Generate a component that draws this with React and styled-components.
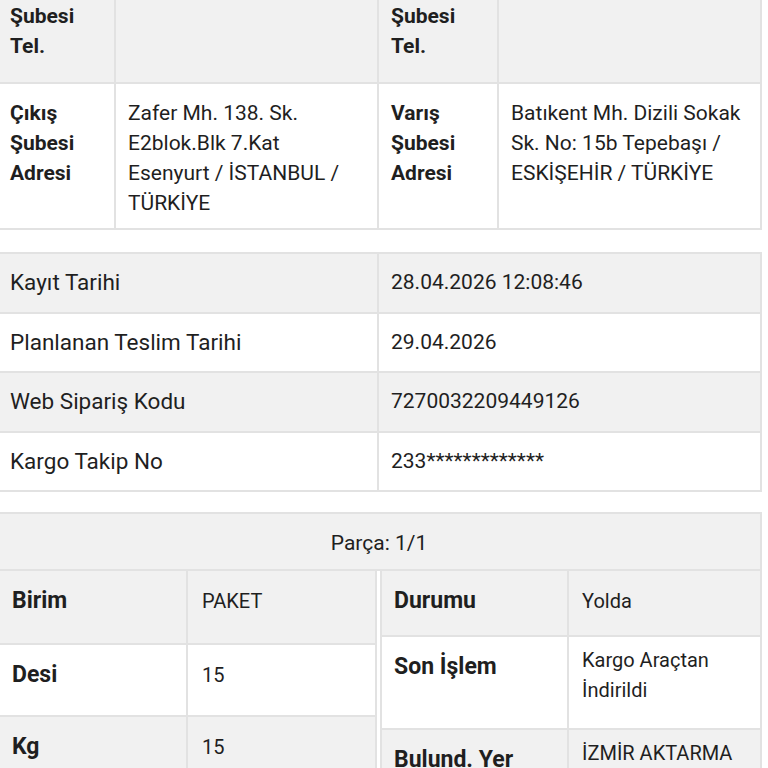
import React from 'react';
import styled, { createGlobalStyle } from 'styled-components';

const line = '#e2e2e2';
const shade = '#f1f1f1';

const GlobalStyle = createGlobalStyle`
  html, body {
    margin: 0;
    padding: 0;
    background: #fff;
  }
  body {
    font-family: Roboto, "Noto Sans", "Liberation Sans", sans-serif;
    color: #1f1f1f;
    overflow: hidden;
  }
`;

// the page is scrolled, so the first row starts above the window
const Page = styled.div`
  width: 764px;
  margin: -45px 0 0 -2px;
`;

const AddressGrid = styled.div`
  display: grid;
  grid-template-columns: 118px 263px 120px 263px;
  border-top: 2px solid ${line};
`;

const AddressCell = styled.div`
  padding: 14px 12px ${p => p.$pb || 10}px;
  background: ${p => (p.$shade ? shade : '#fff')};
  border-right: 2px solid ${line};
  border-bottom: 2px solid ${line};
  font-size: 21px;
  line-height: 30px;
  font-weight: ${p => (p.$bold ? 700 : 400)};
`;

const DetailGrid = styled.div`
  display: grid;
  grid-template-columns: 381px 383px;
  margin-top: 22px;
  border-top: 2px solid ${line};
`;

const DetailCell = styled.div`
  padding: 13px 12px 14.5px;
  background: ${p => (p.$shade ? shade : '#fff')};
  border-right: 2px solid ${line};
  border-bottom: 2px solid ${line};
  font-size: ${p => (p.$label ? '22.5px' : '21px')};
  line-height: 30px;
`;

const PieceBox = styled.div`
  margin-top: 20px;
  border-top: 2px solid ${line};
`;

const PieceHeader = styled.div`
  padding: 14px 12px 11px;
  background: ${shade};
  border-right: 2px solid ${line};
  border-bottom: 2px solid ${line};
  text-align: center;
  font-size: 21px;
  line-height: 30px;
`;

const Split = styled.div`
  display: grid;
  grid-template-columns: 379px 385px;
  align-items: start;
`;

const SubTable = styled.div`
  display: grid;
  grid-template-columns: ${p => p.$cols};
  margin-left: ${p => p.$offset || 0}px;
  border-left: ${p => (p.$offset ? `2px solid ${line}` : 'none')};
`;

const SubCell = styled.div`
  box-sizing: border-box;
  height: ${p => p.$h}px;
  padding: ${p => (p.$label ? 15 : p.$multi ? 8 : 15)}px 12px 0 ${p => p.$pl || 13}px;
  background: ${p => (p.$shade ? shade : '#fff')};
  border-right: 2px solid ${line};
  border-bottom: 2px solid ${line};
  font-size: ${p => (p.$label ? '23px' : '20px')};
  font-weight: ${p => (p.$label ? 700 : 400)};
  line-height: 30px;
`;

const addressRows = [
  {
    shade: true,
    pb: 21,
    cells: ['Çıkış Şubesi Tel.', '', 'Varış Şubesi Tel.', ''],
  },
  {
    shade: false,
    cells: [
      'Çıkış Şubesi Adresi',
      'Zafer Mh. 138. Sk. E2blok.Blk 7.Kat Esenyurt / İSTANBUL / TÜRKİYE',
      'Varış Şubesi Adresi',
      'Batıkent Mh. Dizili Sokak Sk. No: 15b Tepebaşı / ESKİŞEHİR / TÜRKİYE',
    ],
  },
];

const details = [
  ['Kayıt Tarihi', '28.04.2026 12:08:46'],
  ['Planlanan Teslim Tarihi', '29.04.2026'],
  ['Web Sipariş Kodu', '7270032209449126'],
  ['Kargo Takip No', '233*************'],
];

const leftRows = [
  { label: 'Birim', value: 'PAKET', h: 74 },
  { label: 'Desi', value: '15', h: 72 },
  { label: 'Kg', value: '15', h: 72 },
];

const rightRows = [
  { label: 'Durumu', value: 'Yolda', h: 66 },
  { label: 'Son İşlem', value: 'Kargo Araçtan İndirildi', h: 93, multi: true },
  { label: 'Bulund. Yer', value: 'İZMİR AKTARMA', h: 72, multi: true },
];

const App = () => {
  return (
    <>
      <GlobalStyle />
      <Page>
        <AddressGrid>
          {addressRows.map((row, r) =>
            row.cells.map((text, i) => (
              <AddressCell
                key={`${r}-${i}`}
                $shade={row.shade}
                $bold={i % 2 === 0}
                $pb={row.pb}
              >
                {text}
              </AddressCell>
            ))
          )}
        </AddressGrid>

        <DetailGrid>
          {details.map(([label, value], i) => (
            <React.Fragment key={label}>
              <DetailCell $label $shade={i % 2 === 0}>{label}</DetailCell>
              <DetailCell $shade={i % 2 === 0}>{value}</DetailCell>
            </React.Fragment>
          ))}
        </DetailGrid>

        <PieceBox>
          <PieceHeader>Parça: 1/1</PieceHeader>
          <Split>
            <SubTable $cols="190px 189px">
              {leftRows.map((row, i) => (
                <React.Fragment key={row.label}>
                  <SubCell $label $pl={14} $h={row.h} $shade={i % 2 === 0}>
                    {row.label}
                  </SubCell>
                  <SubCell $pl={14} $h={row.h} $shade={i % 2 === 0}>
                    {row.value}
                  </SubCell>
                </React.Fragment>
              ))}
            </SubTable>
            <SubTable $cols="187px 193px" $offset={3}>
              {rightRows.map((row, i) => (
                <React.Fragment key={row.label}>
                  <SubCell $label $pl={12} $h={row.h} $shade={i % 2 === 0}>
                    {row.label}
                  </SubCell>
                  <SubCell $pl={13} $h={row.h} $multi={row.multi} $shade={i % 2 === 0}>
                    {row.value}
                  </SubCell>
                </React.Fragment>
              ))}
            </SubTable>
          </Split>
        </PieceBox>
      </Page>
    </>
  );
};

export default App;
